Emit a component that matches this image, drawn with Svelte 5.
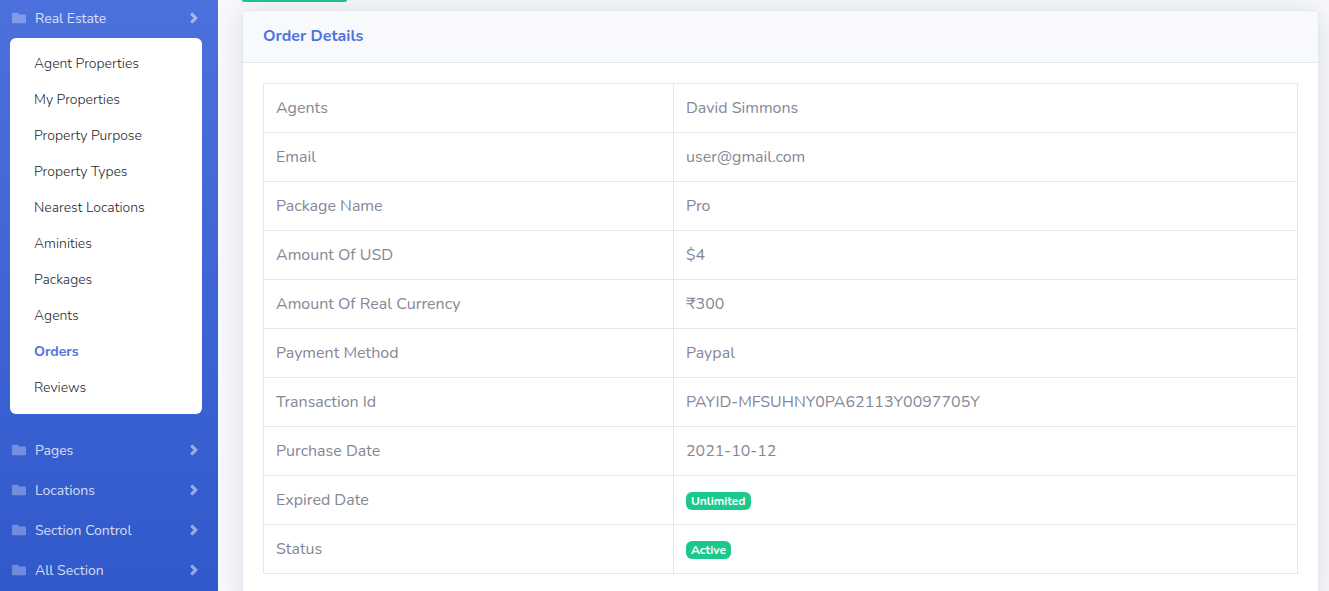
<script>
  const links = [
    'Agent Properties', 'My Properties', 'Property Purpose', 'Property Types',
    'Nearest Locations', 'Aminities', 'Packages', 'Agents', 'Orders', 'Reviews'
  ];
  const sections = ['Pages', 'Locations', 'Section Control', 'All Section'];
  const rows = [
    ['Agents', 'David Simmons'],
    ['Email', 'user@gmail.com'],
    ['Package Name', 'Pro'],
    ['Amount Of USD', '$4'],
    ['Amount Of Real Currency', '₹300'],
    ['Payment Method', 'Paypal'],
    ['Transaction Id', 'PAYID-MFSUHNY0PA62113Y0097705Y'],
    ['Purchase Date', '2021-10-12'],
    ['Expired Date', 'Unlimited', true],
    ['Status', 'Active', true]
  ];
</script>

{#snippet toggle(label, open)}
  <button class="toggle" type="button" aria-expanded={open}>
    <svg class="folder" viewBox="0 0 512 512" aria-hidden="true">
      <path d="M464 128H272l-64-64H48C21.500 64 0 85.500 0 112v288c0 26.500 21.500 48 48 48h416c26.500 0 48-21.500 48-48V176c0-26.500-21.500-48-48-48z" />
    </svg>
    <span>{label}</span>
    <svg class="chevron" viewBox="0 0 256 512" aria-hidden="true">
      <path d="M224.300 273l-136 136c-9.400 9.400-24.600 9.400-33.900 0l-22.600-22.600c-9.400-9.400-9.400-24.600 0-33.900l96.400-96.400-96.400-96.400c-9.400-9.400-9.400-24.600 0-33.900L54.300 103c9.400-9.400 24.600-9.400 33.900 0l136 136c9.500 9.400 9.500 24.600.1 34z" />
    </svg>
  </button>
{/snippet}

<div class="page">
  <nav class="sidebar">
    {@render toggle('Real Estate', true)}
    <div class="submenu">
      {#each links as link}
        <a href="#top" class:active={link === 'Orders'}>{link}</a>
      {/each}
    </div>
    {#each sections as section}
      {@render toggle(section, false)}
    {/each}
  </nav>

  <main>
    <div class="button-edge"></div>
    <section class="card">
      <header><h6>Order Details</h6></header>
      <div class="card-body">
        <table>
          <tbody>
            {#each rows as [name, value, badge]}
              <tr>
                <td class="name">{name}</td>
                <td>{#if badge}<span class="badge">{value}</span>{:else}{value}{/if}</td>
              </tr>
            {/each}
          </tbody>
        </table>
      </div>
    </section>
  </main>
</div>

<style>
  :global(body) {
    background: #f8f9fc;
    overflow: hidden;
  }
  * { box-sizing: border-box; }
  .page {
    display: flex;
    height: 100vh;
    overflow: hidden;
    color: #858796;
    font: 16px/24px Nunito, Lato, sans-serif;
  }
  .sidebar {
    flex: 0 0 218px;
    background: linear-gradient(180deg, #4c71dd 0%, #3159cb 100%);
  }
  .toggle {
    display: flex;
    align-items: center;
    width: 100%;
    height: 40px;
    padding: 0 20px 0 12px;
    border: 0;
    background: none;
    color: rgba(255, 255, 255, 0.8);
    font: inherit;
    font-size: 14px;
    text-align: left;
  }
  .toggle:first-child { height: 38px; padding-bottom: 2px; }
  .toggle span { flex: 1; margin-left: 9px; padding-top: 1px; }
  .folder { width: 14px; height: 14px; fill: rgba(255, 255, 255, 0.3); }
  .chevron { width: 8px; height: 16px; }
  .chevron path {
    fill: #fff;
    stroke: #fff;
    stroke-width: 24;
  }
  .chevron { opacity: 0.5; }
  .submenu {
    margin: 0 16px 16px 10px;
    padding: 8px 0;
    border-radius: 6px;
    background: #fff;
  }
  .submenu a {
    display: block;
    padding: 0 24px;
    color: #24252d;
    font-size: 14px;
    font-weight: 300;
    line-height: 36px;
    text-decoration: none;
  }
  .submenu a.active { color: #4e73df; font-weight: 700; }
  main { flex: 1; min-width: 0; padding: 0 10px 0 24px; }
  .button-edge {
    width: 105px;
    height: 2px;
    margin-bottom: 8px;
    border-radius: 0 0 6px 6px;
    background: #1cc88a;
  }
  .card {
    min-height: 100vh;
    border: 1px solid #e3e6f0;
    border-radius: 6px;
    background: #fff;
    box-shadow: 0 2px 28px rgba(58, 59, 69, 0.15);
  }
  header {
    padding: 16px 20px 16px;
    border-bottom: 1px solid #e3e6f0;
    border-radius: 5px 5px 0 0;
    background: #f8f9fc;
  }
  h6 { margin: 0; color: #4e73df; font-size: 16px; line-height: 19px; font-weight: 700; }
  .card-body { padding: 20px; }
  table { width: 100%; border-collapse: collapse; }
  td { height: 49px; padding: 12px; border: 1px solid #e3e6f0; vertical-align: top; }
  .name { width: 39.65%; }
  .badge {
    display: inline-block;
    padding: 3px 5px;
    border-radius: 6px;
    background: #1cc88a;
    color: #fff;
    font-size: 12px;
    line-height: 12px;
    font-weight: 700;
    vertical-align: middle;
  }
</style>
